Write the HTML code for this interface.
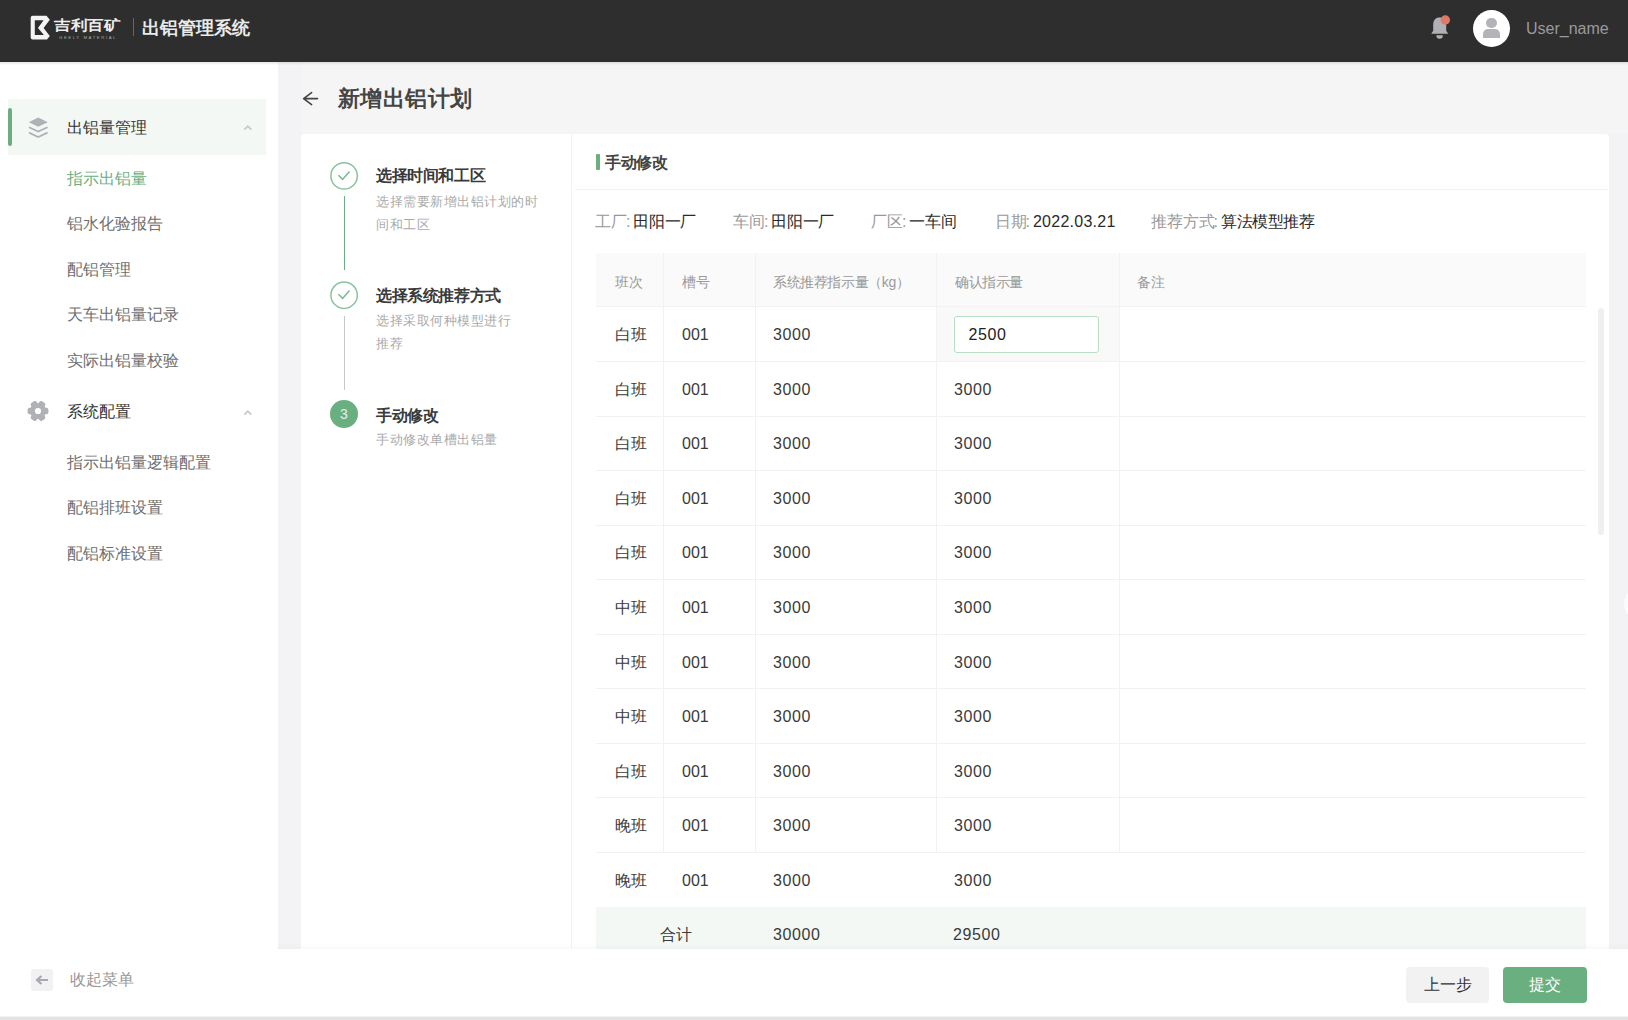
<!DOCTYPE html>
<html><head><meta charset="utf-8">
<style>
*{margin:0;padding:0;box-sizing:border-box}
html,body{width:1628px;height:1020px;overflow:hidden;background:#f3f3f5;font-family:"Liberation Sans",sans-serif;color:#333}
.a{position:absolute}
.t{position:absolute;white-space:nowrap;line-height:1}
#hdr{left:0;top:0;width:1628px;height:62px;background:#2e2e2e}
#side{left:0;top:62px;width:278px;height:888px;background:#fff}
#bottom{left:0;top:949px;width:1628px;height:67px;background:#fff}
#strip{left:0;top:1016.5px;width:1628px;height:3.5px;background:#e4e4e4}
.mi{font-size:16px;color:#6e6e6e;left:67px}
.sd{font-size:13px;letter-spacing:0.5px;color:#aaa;line-height:22.7px;left:376px;white-space:nowrap}
.st{font-size:16px;letter-spacing:-0.4px;color:#3a3a3a;font-weight:bold;left:376px}
.vl{position:absolute;width:1.3px;left:343.6px}
.lab{color:#999}
.row{position:absolute;left:596px;width:990px;height:54.5px;border-bottom:1px solid #f0f0f0}
.cl{position:absolute;top:253px;width:1px;background:#f2f2f2}
.n{letter-spacing:0.6px}
.c{position:absolute;white-space:nowrap;line-height:1;font-size:16px;color:#3a3a3a}
</style></head><body>
<div id="hdr" class="a"></div>
<div id="side" class="a"></div>
<div id="bottom" class="a"></div>
<div id="strip" class="a"></div>

<!-- header logo -->
<svg class="a" style="left:30px;top:15px" width="21" height="26" viewBox="0 0 21 26">
<path d="M0.7 2.8 Q0.7 0.8 2.7 0.8 H16.5 L19.8 4.8 L13.6 13 L19.8 20.9 L17 24.6 H2.7 Q0.7 24.6 0.7 22.6 Z M4.8 5.2 V19.9 H13.9 L8 13 L13.6 5.2 Z" fill="#f4f4f4" fill-rule="evenodd"/>
</svg>
<div class="t" style="left:54px;top:18.5px;font-size:17px;color:#eee;font-weight:bold;letter-spacing:0.2px;transform:scale(0.97,0.82);transform-origin:0 0">吉利百矿</div>
<div class="t" style="left:59px;top:35.5px;font-size:4.3px;color:#aaa;letter-spacing:1.55px;top:36px">GEELY MATERIAL</div>
<div class="a" style="left:132.5px;top:18px;width:1px;height:18px;background:#666"></div>
<div class="t" style="left:142px;top:19px;font-size:18px;color:#eaeaea;font-weight:bold">出铝管理系统</div>

<!-- header right -->
<svg class="a" style="left:1430px;top:14px" width="22" height="26" viewBox="0 0 22 26">
<path d="M3.2 11 C3.2 6 5.5 3.5 9.6 3.5 C13.7 3.5 16.2 6 16.2 11 V16.8 L18.2 19.8 H1.2 L3.2 16.8 Z" fill="#b0b1b7"/>
<path d="M6.3 21.2 H12.9 Q12.9 24.8 9.6 24.8 Q6.3 24.8 6.3 21.2 Z" fill="#b0b1b7"/>
<circle cx="15.3" cy="6" r="4.7" fill="#dc7a65"/>
</svg>
<div class="a" style="left:1473.3px;top:9.5px;width:37px;height:37px;border-radius:50%;background:#fff;overflow:hidden">
 <div class="a" style="left:13px;top:8.2px;width:10.8px;height:10.8px;border-radius:50%;background:#b3b3ba"></div>
 <div class="a" style="left:10.1px;top:19.8px;width:16.6px;height:9px;border-radius:5px 5px 0 0;background:#b3b3ba"></div>
</div>
<div class="t" style="left:1526px;top:21px;font-size:16px;color:#9a9a9a">User_name</div>

<!-- sidebar -->
<div class="a" style="left:8px;top:99px;width:258px;height:56px;background:#f3f8f5"></div>
<div class="a" style="left:8px;top:108px;width:4px;height:38px;background:#6aaf80;border-radius:2px"></div>
<svg class="a" style="left:28px;top:117px" width="21" height="22" viewBox="0 0 21 22">
<path d="M0.8 5.2 L10.2 0.6 L19.8 5.2 L10.2 9.8 Z" fill="#b0b0b6"/>
<path d="M1 10.3 L10.2 14.6 L19.6 10.3" fill="none" stroke="#b0b0b6" stroke-width="1.8"/>
<path d="M1 15.6 L10.2 20 L19.6 15.6" fill="none" stroke="#b0b0b6" stroke-width="1.8"/>
</svg>
<div class="t mi" style="top:120px;color:#333">出铝量管理</div>
<svg class="a" style="left:242.5px;top:123.5px" width="10" height="7" viewBox="0 0 10 7"><path d="M1.3 5.6 L4.8 2.2 L8.3 5.6" fill="none" stroke="#c6c6cd" stroke-width="1.6"/></svg>
<div class="t mi" style="top:171px;color:#6aaf80">指示出铝量</div>
<div class="t mi" style="top:216px">铝水化验报告</div>
<div class="t mi" style="top:262px">配铝管理</div>
<div class="t mi" style="top:307px">天车出铝量记录</div>
<div class="t mi" style="top:353px">实际出铝量校验</div>
<svg class="a" style="left:26.6px;top:400px" width="22" height="22" viewBox="-11 -11 22 22">
<g fill="#b0b1b7"><circle r="8"/><rect x="-10.4" y="-3.3" width="20.8" height="6.6" rx="2"/><rect x="-10.4" y="-3.3" width="20.8" height="6.6" rx="2" transform="rotate(60)"/><rect x="-10.4" y="-3.3" width="20.8" height="6.6" rx="2" transform="rotate(120)"/></g>
<circle r="3.1" fill="#fff"/>
</svg>
<div class="t mi" style="top:404px;color:#333">系统配置</div>
<svg class="a" style="left:242.5px;top:408.5px" width="10" height="7" viewBox="0 0 10 7"><path d="M1.3 5.6 L4.8 2.2 L8.3 5.6" fill="none" stroke="#c6c6cd" stroke-width="1.6"/></svg>
<div class="t mi" style="top:455px">指示出铝量逻辑配置</div>
<div class="t mi" style="top:500px">配铝排班设置</div>
<div class="t mi" style="top:546px">配铝标准设置</div>

<!-- collapse -->
<div class="a" style="left:31px;top:969px;width:22px;height:22px;background:#f2f2f4;border-radius:2px"></div>
<svg class="a" style="left:35px;top:974px" width="14" height="12" viewBox="0 0 14 12"><path d="M13 6 H3 M6.5 2 L2 6 L6.5 10" fill="none" stroke="#a8a8b3" stroke-width="2.2"/></svg>
<div class="t" style="left:70px;top:972px;font-size:16px;color:#999">收起菜单</div>

<!-- content bg -->
<div class="a" style="left:302px;top:62px;width:1326px;height:72px;background:#f5f5f5"></div>
<svg class="a" style="left:301px;top:89px" width="18" height="18" viewBox="0 0 18 18"><path d="M16.5 9.6 H2.6 M10.6 3.6 L2.6 9.6 L10.6 15.6" fill="none" stroke="#444" stroke-width="1.6" stroke-linecap="round" stroke-linejoin="round"/></svg>
<div class="t" style="left:337.5px;top:87.5px;font-size:22px;letter-spacing:0.6px;color:#454545;font-weight:bold">新增出铝计划</div>

<!-- card -->
<div class="a" style="left:301px;top:134px;width:270px;height:815px;background:#fff;border-radius:4px 0 0 0"></div>
<div class="a" style="left:572px;top:134px;width:1037px;height:815px;background:#fff;border-radius:0 4px 0 0"></div>

<!-- steps -->
<svg class="a" style="left:330px;top:162px" width="28" height="28" viewBox="0 0 28 28"><circle cx="14.1" cy="13.9" r="13.2" fill="none" stroke="#8ac39e" stroke-width="1.5"/><path d="M8.4 13.2 L12.6 17.4 L19.5 9.5" fill="none" stroke="#78b98e" stroke-width="1.5"/></svg>
<div class="t st" style="top:168px">选择时间和工区</div>
<div class="a sd" style="top:191px">选择需要新增出铝计划的时<br>间和工区</div>
<div class="vl" style="top:196px;height:74px;background:#6aaf80"></div>

<svg class="a" style="left:330px;top:281px" width="28" height="28" viewBox="0 0 28 28"><circle cx="14.1" cy="14.2" r="13.2" fill="none" stroke="#8ac39e" stroke-width="1.5"/><path d="M8.4 13.2 L12.6 17.4 L19.5 9.5" fill="none" stroke="#78b98e" stroke-width="1.5"/></svg>
<div class="t st" style="top:288px">选择系统推荐方式</div>
<div class="a sd" style="top:310px">选择采取何种模型进行<br>推荐</div>
<div class="vl" style="top:316px;height:74px;background:#c8c8c8"></div>

<div class="a" style="left:330px;top:400px;width:28px;height:28px;background:#6aaf80;border-radius:50%"></div>
<div class="t" style="left:330px;top:407px;width:28px;text-align:center;font-size:14px;color:#e4f1e8">3</div>
<div class="t st" style="top:407.5px">手动修改</div>
<div class="a sd" style="top:429px">手动修改单槽出铝量</div>

<!-- right panel -->
<div class="a" style="left:596px;top:154px;width:4px;height:16px;background:#6aaf80;border-radius:1px"></div>
<div class="t" style="left:605px;top:155px;font-size:16px;letter-spacing:-0.3px;color:#444;font-weight:bold">手动修改</div>
<div class="a" style="left:575px;top:188.5px;width:1033px;height:1px;background:#f3f3f3"></div>

<div class="t" style="left:595px;top:213.5px;font-size:16px"><span class="lab">工厂<span style="margin:0 3px 0 -1px">:</span></span><span style="color:#2a2a2a;letter-spacing:-0.4px">田阳一厂</span></div>
<div class="t" style="left:733px;top:213.5px;font-size:16px"><span class="lab">车间<span style="margin:0 3px 0 -1px">:</span></span><span style="color:#2a2a2a;letter-spacing:-0.4px">田阳一厂</span></div>
<div class="t" style="left:871px;top:213.5px;font-size:16px"><span class="lab">厂区<span style="margin:0 3px 0 -1px">:</span></span><span style="color:#2a2a2a;letter-spacing:-0.4px">一车间</span></div>
<div class="t" style="left:994.5px;top:213.5px;font-size:16px"><span class="lab">日期<span style="margin:0 3px 0 -1px">:</span></span><span style="color:#2a2a2a;letter-spacing:0.25px;">2022.03.21</span></div>
<div class="t" style="left:1150.5px;top:213.5px;font-size:16px"><span class="lab">推荐方式<span style="margin:0 3px 0 -1px">:</span></span><span style="color:#2a2a2a;letter-spacing:-0.4px">算法模型推荐</span></div>

<!-- table -->
<div class="a" style="left:596px;top:253px;width:990px;height:54.4px;background:#fafafa;border-bottom:1px solid #f2f2f2"></div>
<div class="cl" style="left:663px;height:599.4px"></div>
<div class="cl" style="left:755px;height:599.4px"></div>
<div class="cl" style="left:936px;height:599.4px"></div>
<div class="cl" style="left:1118.5px;height:599.4px"></div>
<div class="c" style="left:615px;top:274.5px;font-size:14px;letter-spacing:-0.4px;color:#999">班次</div>
<div class="c" style="left:682px;top:274.5px;font-size:14px;letter-spacing:-0.4px;color:#999">槽号</div>
<div class="c" style="left:773px;top:274.5px;font-size:14px;letter-spacing:-0.4px;color:#999">系统推荐指示量（kg）</div>
<div class="c" style="left:955px;top:274.5px;font-size:14px;letter-spacing:-0.4px;color:#999">确认指示量</div>
<div class="c" style="left:1137px;top:274.5px;font-size:14px;letter-spacing:-0.4px;color:#999">备注</div>
<div class="a" style="left:596px;top:360.95px;width:990px;height:1px;background:#f2f2f2"></div>
<div class="c" style="left:615px;top:327.20px">白班</div>
<div class="c" style="left:682px;top:327.20px">001</div>
<div class="c n" style="left:773px;top:327.20px">3000</div>
<div class="a" style="left:937px;top:307.4px;width:181.5px;height:53.55px;background:#f9f9f9"></div>
<div class="a" style="left:954px;top:316px;width:145px;height:37px;border:1px solid #b9dec6;border-radius:3px;background:#fff"></div>
<div class="c n" style="left:968.5px;top:327.20px;color:#222">2500</div>
<div class="a" style="left:596px;top:415.50px;width:990px;height:1px;background:#f2f2f2"></div>
<div class="c" style="left:615px;top:381.75px">白班</div>
<div class="c" style="left:682px;top:381.75px">001</div>
<div class="c n" style="left:773px;top:381.75px">3000</div>
<div class="c n" style="left:954px;top:381.75px">3000</div>
<div class="a" style="left:596px;top:470.05px;width:990px;height:1px;background:#f2f2f2"></div>
<div class="c" style="left:615px;top:436.30px">白班</div>
<div class="c" style="left:682px;top:436.30px">001</div>
<div class="c n" style="left:773px;top:436.30px">3000</div>
<div class="c n" style="left:954px;top:436.30px">3000</div>
<div class="a" style="left:596px;top:524.60px;width:990px;height:1px;background:#f2f2f2"></div>
<div class="c" style="left:615px;top:490.85px">白班</div>
<div class="c" style="left:682px;top:490.85px">001</div>
<div class="c n" style="left:773px;top:490.85px">3000</div>
<div class="c n" style="left:954px;top:490.85px">3000</div>
<div class="a" style="left:596px;top:579.15px;width:990px;height:1px;background:#f2f2f2"></div>
<div class="c" style="left:615px;top:545.40px">白班</div>
<div class="c" style="left:682px;top:545.40px">001</div>
<div class="c n" style="left:773px;top:545.40px">3000</div>
<div class="c n" style="left:954px;top:545.40px">3000</div>
<div class="a" style="left:596px;top:633.70px;width:990px;height:1px;background:#f2f2f2"></div>
<div class="c" style="left:615px;top:599.95px">中班</div>
<div class="c" style="left:682px;top:599.95px">001</div>
<div class="c n" style="left:773px;top:599.95px">3000</div>
<div class="c n" style="left:954px;top:599.95px">3000</div>
<div class="a" style="left:596px;top:688.25px;width:990px;height:1px;background:#f2f2f2"></div>
<div class="c" style="left:615px;top:654.50px">中班</div>
<div class="c" style="left:682px;top:654.50px">001</div>
<div class="c n" style="left:773px;top:654.50px">3000</div>
<div class="c n" style="left:954px;top:654.50px">3000</div>
<div class="a" style="left:596px;top:742.80px;width:990px;height:1px;background:#f2f2f2"></div>
<div class="c" style="left:615px;top:709.05px">中班</div>
<div class="c" style="left:682px;top:709.05px">001</div>
<div class="c n" style="left:773px;top:709.05px">3000</div>
<div class="c n" style="left:954px;top:709.05px">3000</div>
<div class="a" style="left:596px;top:797.35px;width:990px;height:1px;background:#f2f2f2"></div>
<div class="c" style="left:615px;top:763.60px">白班</div>
<div class="c" style="left:682px;top:763.60px">001</div>
<div class="c n" style="left:773px;top:763.60px">3000</div>
<div class="c n" style="left:954px;top:763.60px">3000</div>
<div class="a" style="left:596px;top:851.90px;width:990px;height:1px;background:#f2f2f2"></div>
<div class="c" style="left:615px;top:818.15px">晚班</div>
<div class="c" style="left:682px;top:818.15px">001</div>
<div class="c n" style="left:773px;top:818.15px">3000</div>
<div class="c n" style="left:954px;top:818.15px">3000</div>
<div class="c" style="left:615px;top:872.70px">晚班</div>
<div class="c" style="left:682px;top:872.70px">001</div>
<div class="c n" style="left:773px;top:872.70px">3000</div>
<div class="c n" style="left:954px;top:872.70px">3000</div>
<div class="a" style="left:596px;top:906.5px;width:990px;height:42.5px;background:#f3f8f5"></div>
<div class="c" style="left:660px;top:927px">合计</div>
<div class="c n" style="left:773px;top:927px">30000</div>
<div class="c n" style="left:953px;top:927px">29500</div>

<div class="a" style="left:1597.5px;top:308px;width:6.5px;height:227px;background:#efefef;border-radius:3px"></div>

<div class="a" style="left:0;top:62px;width:1628px;height:3px;background:linear-gradient(rgba(0,0,0,0.10),rgba(0,0,0,0))"></div>
<div class="a" style="left:278px;top:943px;width:1350px;height:6px;background:linear-gradient(rgba(0,0,0,0),rgba(0,0,0,0.025))"></div>
<div class="a" style="left:1623.6px;top:586.5px;width:34px;height:34px;border-radius:50%;background:#fbfbfc"></div>
<!-- buttons -->
<div class="a" style="left:1406px;top:967px;width:83px;height:36px;background:#f2f2f2;border-radius:4px"></div>
<div class="t" style="left:1406px;top:977px;width:83px;text-align:center;font-size:16px;color:#333">上一步</div>
<div class="a" style="left:1503px;top:967px;width:84px;height:36px;background:#6aaf80;border-radius:4px"></div>
<div class="t" style="left:1503px;top:977px;width:84px;text-align:center;font-size:16px;color:#fff">提交</div>
</body></html>
